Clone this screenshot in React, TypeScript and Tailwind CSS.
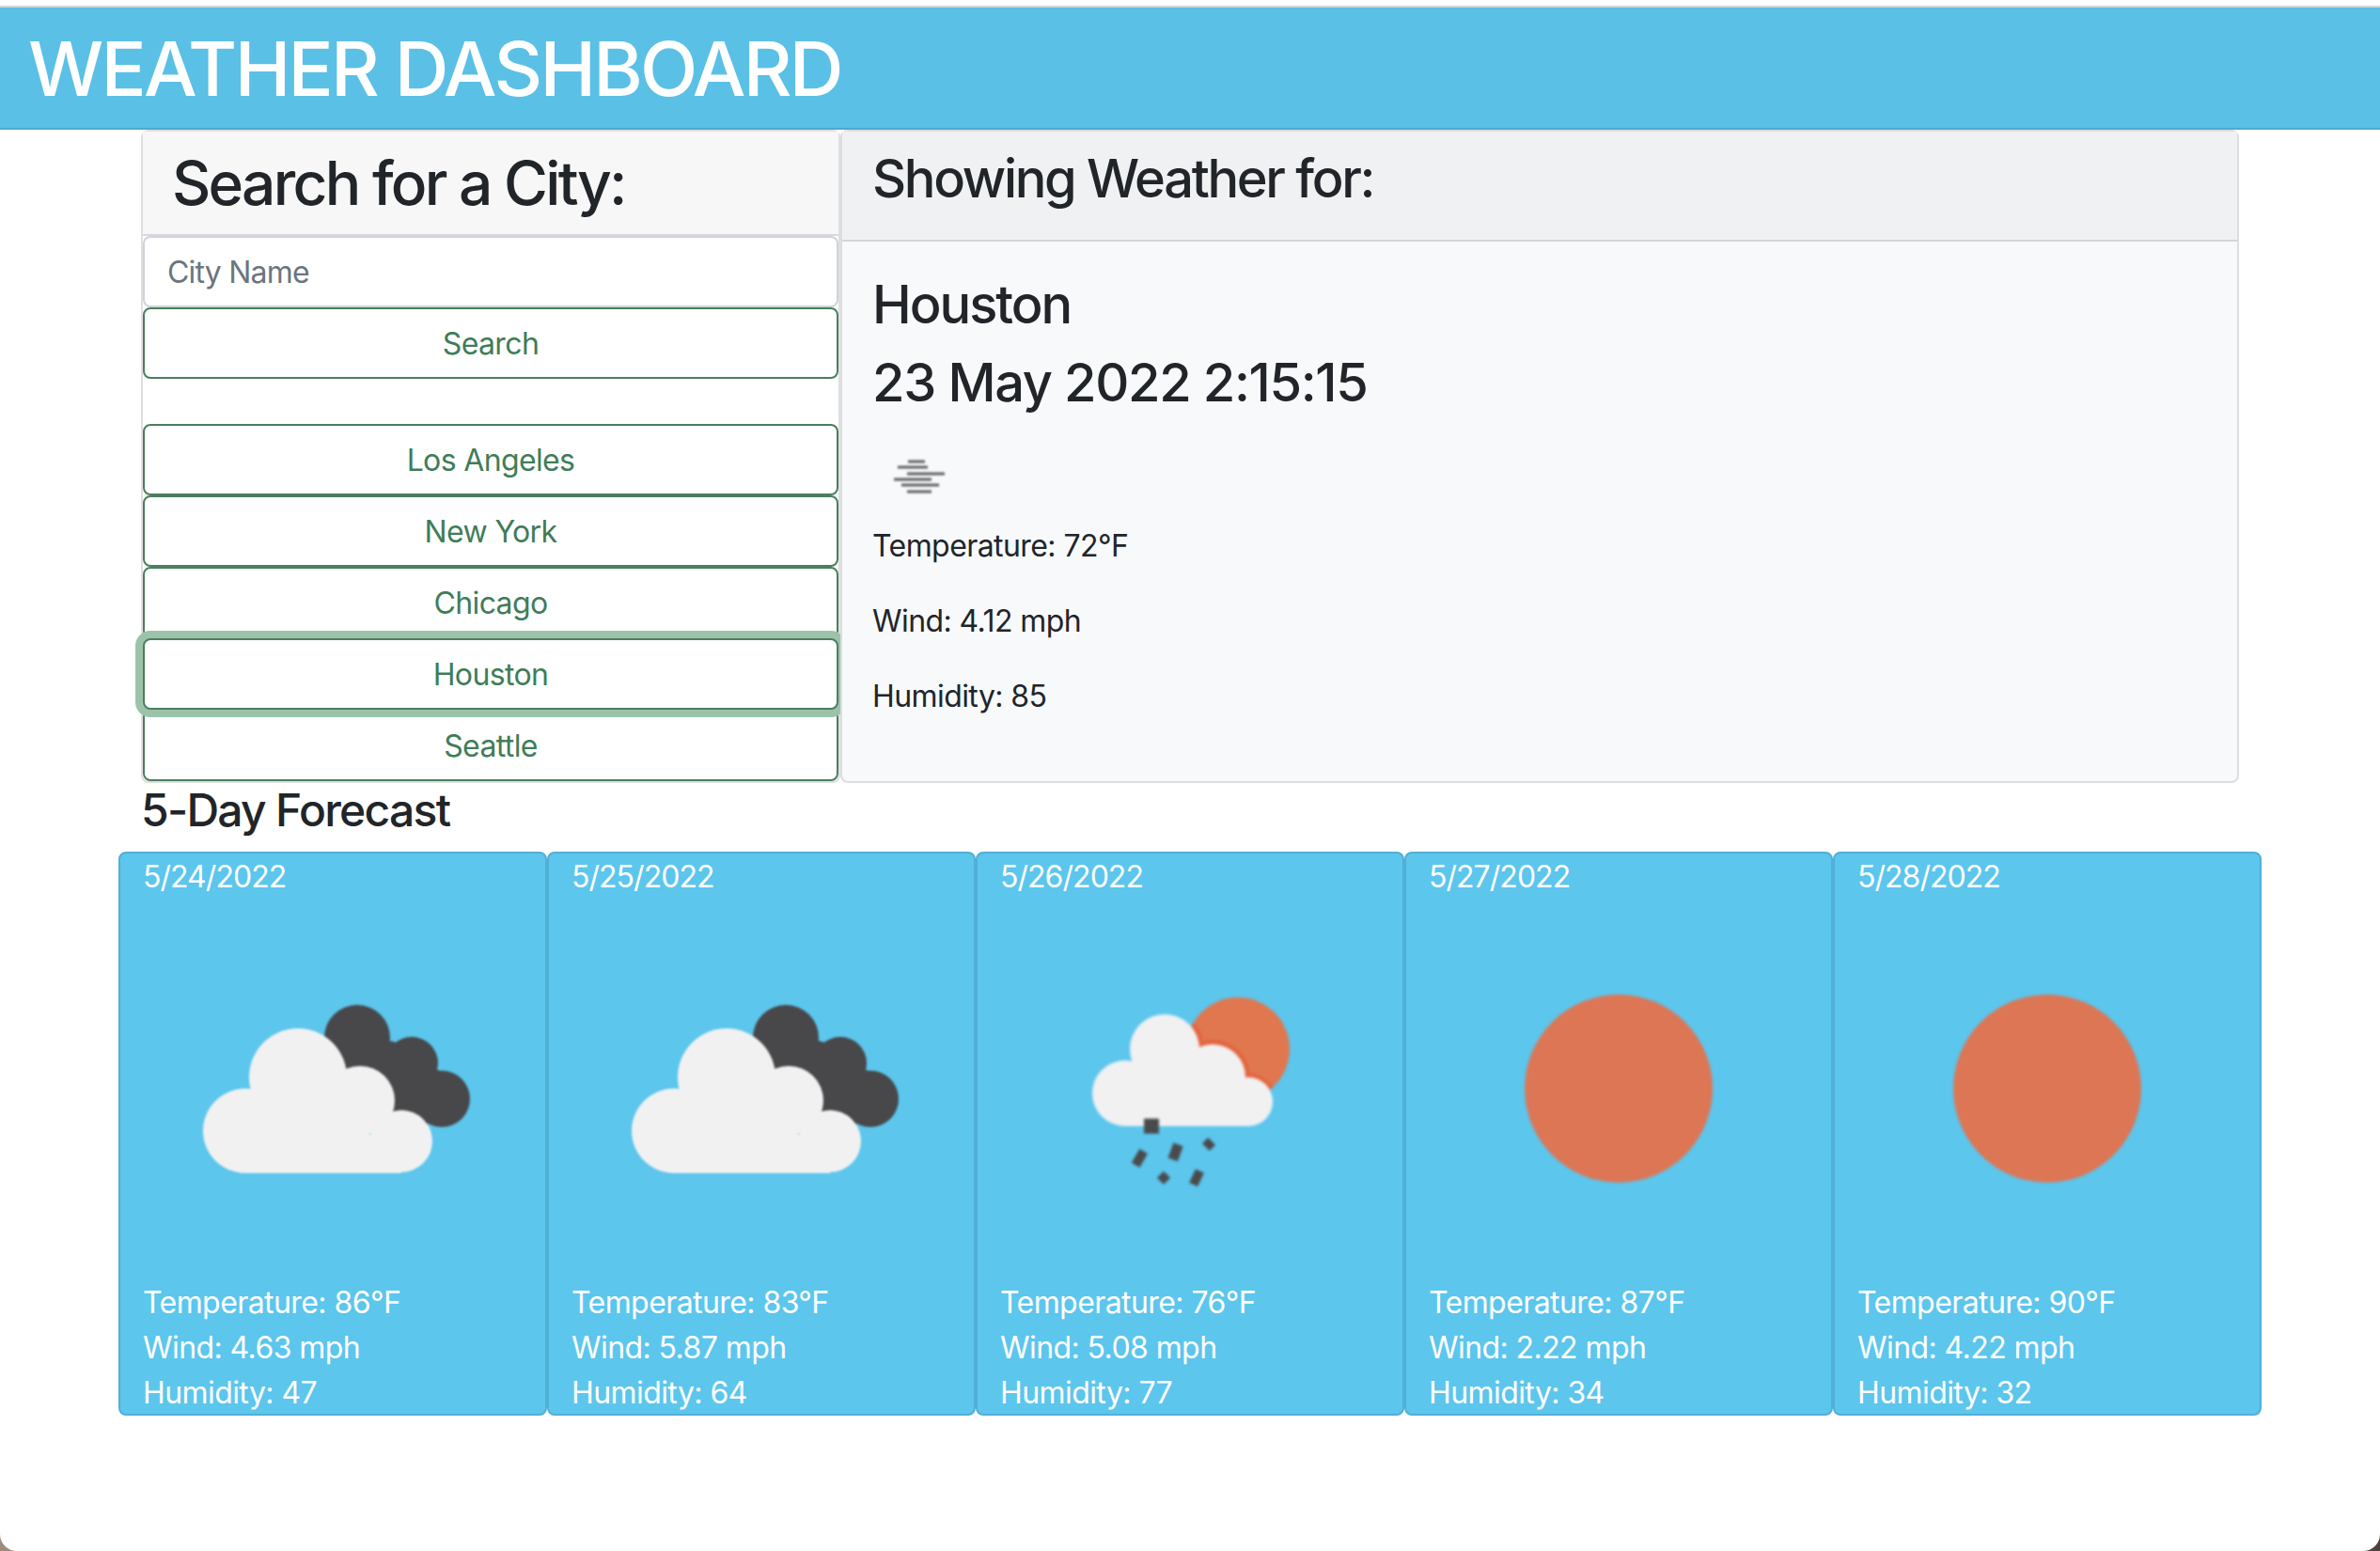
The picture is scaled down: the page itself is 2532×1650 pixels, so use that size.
const days = [
  { date: '5/24/2022', icon: 'clouds', temp: 86, wind: '4.63', humidity: 47 },
  { date: '5/25/2022', icon: 'clouds', temp: 83, wind: '5.87', humidity: 64 },
  { date: '5/26/2022', icon: 'hail', temp: 76, wind: '5.08', humidity: 77 },
  { date: '5/27/2022', icon: 'sun', temp: 87, wind: '2.22', humidity: 34 },
  { date: '5/28/2022', icon: 'sun', temp: 90, wind: '4.22', humidity: 32 },
];

const cities = ['Los Angeles', 'New York', 'Chicago', 'Houston', 'Seattle'];

function CloudsIcon() {
  return (
    <svg viewBox="0 0 400 400" className="block h-[400px] w-[400px] blur-[1px]">
      <g fill="#48484a">
        <circle cx="226" cy="147" r="35" />
        <circle cx="258" cy="170" r="20" />
        <circle cx="284" cy="174" r="28" />
        <circle cx="305" cy="200" r="20" />
        <circle cx="316" cy="212" r="30" />
        <polygon points="205,190 215,175 226,147 284,174 316,212 300,240 235,225" />
      </g>
      <g fill="#f1f1f2">
        <circle cx="107" cy="246" r="45" />
        <circle cx="163" cy="189" r="52" />
        <circle cx="229" cy="214" r="37" />
        <circle cx="273" cy="257" r="33" />
        <rect x="107" y="205" width="122" height="86" />
        <rect x="107" y="250" width="166" height="41" />
      </g>
    </svg>
  );
}

function HailIcon() {
  return (
    <svg viewBox="0 0 400 400" className="block h-[400px] w-[400px] blur-[1.5px]">
      <clipPath id="hail-sun">
        <circle cx="251" cy="159" r="55" />
      </clipPath>
      <circle cx="251" cy="159" r="55" fill="#e0774f" />
      <g fill="#e2653f" clipPath="url(#hail-sun)">
        <circle cx="173" cy="159" r="42" />
        <circle cx="224" cy="189" r="40" />
        <circle cx="262" cy="216" r="31" />
      </g>
      <g fill="#f1f1f2">
        <circle cx="131" cy="206" r="35" />
        <circle cx="173" cy="159" r="37" />
        <circle cx="224" cy="189" r="35" />
        <circle cx="262" cy="215" r="26" />
        <rect x="131" y="180" width="93" height="61" />
        <rect x="131" y="215" width="131" height="26" />
      </g>
      <g fill="#4a4a4c">
        <rect x="151" y="233" width="16" height="16" />
        <rect x="139" y="270" width="17" height="10" transform="rotate(-60 147 276)" />
        <rect x="176" y="264" width="17" height="11" transform="rotate(-70 184 269)" />
        <rect x="214" y="256" width="11" height="9" transform="rotate(45 220 261)" />
        <rect x="167" y="291" width="10" height="10" transform="rotate(45 172 296)" />
        <rect x="199" y="291" width="16" height="10" transform="rotate(-65 207 296)" />
      </g>
    </svg>
  );
}

function SunIcon() {
  return (
    <svg viewBox="0 0 400 400" className="block h-[400px] w-[400px] blur-[1.5px]">
      <circle cx="200" cy="201" r="100" fill="#dc7655" />
    </svg>
  );
}

function FogIcon() {
  return (
    <svg viewBox="0 0 100 100" className="mt-px block h-[100px] w-[100px] blur-[0.8px]">
      <g stroke="#636366" strokeWidth="3">
        <line x1="38" y1="34" x2="56" y2="34" />
        <line x1="27" y1="40" x2="59" y2="40" />
        <line x1="37" y1="47" x2="77" y2="47" />
        <line x1="23" y1="53" x2="63" y2="53" />
        <line x1="31" y1="59" x2="71" y2="59" />
        <line x1="37" y1="66" x2="63" y2="66" />
      </g>
    </svg>
  );
}

function ForecastCard({ day }: { day: (typeof days)[number] }) {
  return (
    <div className="h-[600px] w-[456px] rounded-lg border-2 border-[#52afd6] bg-[#5cc6ed] px-6 pt-px text-[32px] leading-[48px] tracking-[-0.018em] text-white">
      <div className="tracking-[-0.03em]">{day.date}</div>
      <div className="flex h-[405px] justify-center">
        {day.icon === 'clouds' && <CloudsIcon />}
        {day.icon === 'hail' && <HailIcon />}
        {day.icon === 'sun' && <SunIcon />}
      </div>
      <div>Temperature: {day.temp}°F</div>
      <div>Wind: {day.wind} mph</div>
      <div>Humidity: {day.humidity}</div>
    </div>
  );
}

export default function App() {
  return (
    <div className="h-[1650px] w-[2532px] bg-linear-to-r from-[#9b8c7c] to-[#4f423e]">
      <div className="h-[1650px] overflow-hidden rounded-b-[18px] bg-white pt-[6px] font-['Inter',sans-serif] text-[#212529]">
        <header className="flex h-[132px] items-center border-t-2 border-b-2 border-t-[#d4d6d8] border-b-[#4fa9cf] bg-[#5bc0e5] pl-[30px] pt-[2px]">
          <h1 className="text-[80px] font-medium leading-[96px] tracking-[-0.034em] text-white">WEATHER DASHBOARD</h1>
        </header>

        <div className="mx-auto w-[2232px]">
          <div className="flex">
            <aside className="w-[744px] rounded-lg border-2 border-[#dfdfe0] bg-white">
              <div className="h-[111px] border-b-2 border-[#d9d9dc] bg-[#f7f7f7] pl-[31px] pt-4">
                <h2 className="text-[64px] font-medium leading-[77px] tracking-[-0.0425em]">Search for a City:</h2>
              </div>
              <input
                placeholder="City Name"
                className="block h-[76px] w-full rounded-lg border-2 border-[#ced4da] bg-white px-6 text-[32px] tracking-[-0.025em] placeholder:text-[#6c757d]"
              />
              <button className="block h-[76px] w-full rounded-lg border-2 border-[#4a7f5e] pt-[2px] text-[32px] tracking-[-0.02em] text-[#3f7d58]">Search</button>
              <div className="h-12" />
              {cities.map((city) => (
                <button
                  key={city}
                  className={
                    city === 'Houston'
                      ? 'relative z-[1] block h-[76px] w-full rounded-lg border-2 border-[#4a7f5e] bg-white pt-[2px] text-[32px] tracking-[-0.02em] text-[#3f7d58] shadow-[0_0_0_8px_#9cc3a9]'
                      : 'block h-[76px] w-full rounded-lg border-2 border-[#4a7f5e] bg-white pt-[2px] text-[32px] tracking-[-0.02em] text-[#3f7d58]'
                  }
                >
                  {city}
                </button>
              ))}
            </aside>

            <main className="relative z-[2] w-[1488px] rounded-lg border-2 border-[#dcdde0] bg-[#f8f9fb]">
              <div className="h-[117px] border-b-2 border-[#d5d6d9] bg-[#f0f1f3] px-8 pt-[17px]">
                <h3 className="text-[56px] font-medium leading-[67px] tracking-[-0.0415em]">Showing Weather for:</h3>
              </div>
              <div className="px-8 pt-[34px]">
                <h3 className="mb-4 text-[56px] font-medium leading-[67px] tracking-[-0.036em]">Houston</h3>
                <h3 className="mb-4 text-[56px] font-medium leading-[67px] tracking-[-0.0245em]">23 May 2022 2:15:15</h3>
                <FogIcon />
                <div className="text-[32px] leading-[48px] tracking-[-0.018em]">
                  <p className="mb-8">Temperature: 72°F</p>
                  <p className="mb-8">Wind: 4.12 mph</p>
                  <p>Humidity: 85</p>
                </div>
              </div>
            </main>
          </div>

          <h4 className="mb-4 text-[48px] font-medium leading-[57px] tracking-[-0.036em]">5-Day Forecast</h4>
          <div className="-mx-6 flex">
            {days.map((day) => (
              <ForecastCard key={day.date} day={day} />
            ))}
          </div>
        </div>
      </div>
    </div>
  );
}
